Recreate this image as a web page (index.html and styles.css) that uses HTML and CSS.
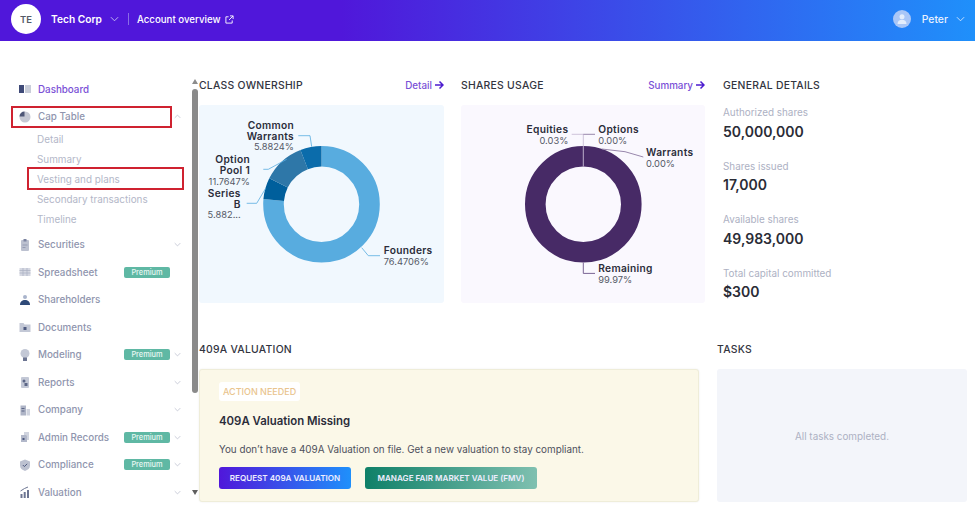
FILE: index.html
```html
<!DOCTYPE html>
<html lang="en">
<head>
<meta charset="utf-8">
<title>Tech Corp</title>
<link rel="stylesheet" href="styles.css">
</head>
<body>
<header class="topbar">
  <div class="avatar">TE</div>
  <span class="company">Tech Corp</span>
  <svg class="chev chev-company" viewBox="0 0 10 6"><path d="M1 1l4 4 4-4"/></svg>
  <span class="divider"></span>
  <span class="overview">Account overview</span>
  <svg class="ext" viewBox="0 0 10 10"><path d="M8 6v3H1V2h3M5.500 1H9v3.500M9 1L4.500 5.500"/></svg>
  <span class="spacer"></span>
  <svg class="user" viewBox="0 0 18 18"><circle cx="9" cy="9" r="9" fill="#a9c6f7"/><circle cx="9" cy="6.800" r="2.500" fill="#e3edfc"/><path d="M4.500 14c0-3 2-4.300 4.500-4.300s4.500 1.300 4.500 4.300z" fill="#e3edfc"/></svg>
  <span class="username">Peter</span>
  <svg class="chev chev-user" viewBox="0 0 10 6"><path d="M1 1l4 4 4-4"/></svg>
</header>

<div class="layout">
  <aside class="sidebar">
    <nav class="nav">
      <div class="row active">
        <svg class="ico" viewBox="0 0 14 14"><rect x="1" y="3" width="5" height="8" fill="#3f4a78"/><rect x="7" y="3" width="6" height="8" fill="#c9cdd9"/></svg>
        <span class="label">Dashboard</span>
      </div>
      <div class="row">
        <svg class="ico" viewBox="0 0 14 14"><circle cx="7" cy="7" r="5.500" fill="#c6c9d4"/><path d="M6.500 1.500v5h-5a5 5 0 0 1 5-5z" fill="#4e5777"/></svg>
        <span class="label">Cap Table</span>
        <svg class="arrow" viewBox="0 0 10 6"><path d="M1 5l4-4 4 4"/></svg>
        <span class="mark mark-cap"></span>
      </div>
      <div class="subs">
        <div class="sub">Detail</div>
        <div class="sub">Summary</div>
        <div class="sub">Vesting and plans<span class="mark mark-vest"></span></div>
        <div class="sub">Secondary transactions</div>
        <div class="sub">Timeline</div>
      </div>
      <div class="row row-after-subs">
        <svg class="ico" viewBox="0 0 14 14"><rect x="3" y="2" width="8" height="11" rx="1" fill="#bcc1d0"/><rect x="5.500" y="1" width="3" height="2.500" fill="#7b83a0"/><path d="M4.500 7h5M4.500 9.500h3" stroke="#8d94ad" stroke-width=".8"/></svg>
        <span class="label">Securities</span>
        <svg class="arrow" viewBox="0 0 10 6"><path d="M1 1l4 4 4-4"/></svg>
      </div>
      <div class="row">
        <svg class="ico" viewBox="0 0 14 14"><rect x="1.500" y="3" width="11" height="8" fill="#d5d8e2"/><path d="M1.500 5.500h11M1.500 8h11M5 3v8M9 3v8" stroke="#aab0c2" stroke-width=".7"/></svg>
        <span class="label">Spreadsheet</span>
        <span class="badge">Premium</span>
      </div>
      <div class="row">
        <svg class="ico" viewBox="0 0 14 14"><circle cx="7" cy="4" r="2" fill="#a9b4cc"/><path d="M2 12c0-3.500 2.200-5 5-5s5 1.500 5 5z" fill="#2f4a78"/></svg>
        <span class="label">Shareholders</span>
      </div>
      <div class="row">
        <svg class="ico" viewBox="0 0 14 14"><path d="M1.500 3h4l1 1.500h6V12h-11z" fill="#c3c8d6"/><rect x="5.500" y="7" width="3" height="3" fill="#4e5a80"/></svg>
        <span class="label">Documents</span>
      </div>
      <div class="row">
        <svg class="ico" viewBox="0 0 14 14"><circle cx="7" cy="5.500" r="4.500" fill="#c3c8d6"/><rect x="5" y="9.500" width="4" height="3.500" fill="#6c7592"/></svg>
        <span class="label">Modeling</span>
        <span class="badge">Premium</span>
        <svg class="arrow" viewBox="0 0 10 6"><path d="M1 1l4 4 4-4"/></svg>
      </div>
      <div class="row">
        <svg class="ico" viewBox="0 0 14 14"><rect x="3" y="2" width="8" height="11" rx="1" fill="#c3c8d6"/><circle cx="6" cy="6" r="1.500" fill="#5c6686"/><rect x="6.500" y="8" width="3" height="3" fill="#5c6686"/></svg>
        <span class="label">Reports</span>
        <svg class="arrow" viewBox="0 0 10 6"><path d="M1 1l4 4 4-4"/></svg>
      </div>
      <div class="row">
        <svg class="ico" viewBox="0 0 14 14"><rect x="2.500" y="2.500" width="5.500" height="10" fill="#aeb4c6"/><rect x="8.500" y="6" width="3.500" height="6.500" fill="#d0d4df"/><path d="M3.500 5.500h3M3.500 8h3" stroke="#5c6686"/></svg>
        <span class="label">Company</span>
        <svg class="arrow" viewBox="0 0 10 6"><path d="M1 1l4 4 4-4"/></svg>
      </div>
      <div class="row">
        <svg class="ico" viewBox="0 0 14 14"><path d="M6 2h5v8H6z" fill="#d0d4df"/><path d="M3 5h5l1 1v6H3z" fill="#b2b8ca"/><rect x="4.500" y="8" width="2" height="2" fill="#4e5a80"/></svg>
        <span class="label">Admin Records</span>
        <span class="badge">Premium</span>
        <svg class="arrow" viewBox="0 0 10 6"><path d="M1 1l4 4 4-4"/></svg>
      </div>
      <div class="row">
        <svg class="ico" viewBox="0 0 14 14"><path d="M7 1.500l5 2v4c0 2.800-2.200 4.500-5 5.500-2.800-1-5-2.700-5-5.500v-4z" fill="#bcc1d0"/><path d="M4.800 7l1.600 1.600 2.800-2.800" fill="none" stroke="#4e5a80" stroke-width="1"/></svg>
        <span class="label">Compliance</span>
        <span class="badge">Premium</span>
        <svg class="arrow" viewBox="0 0 10 6"><path d="M1 1l4 4 4-4"/></svg>
      </div>
      <div class="row">
        <svg class="ico" viewBox="0 0 14 14"><path d="M2.500 9h2v4h-2zM5.700 7h2v6h-2zM9 5h2v8H9z" fill="#6c7592"/><path d="M2.500 6l4-2.500L10 2" fill="none" stroke="#6c7592"/></svg>
        <span class="label">Valuation</span>
        <svg class="arrow" viewBox="0 0 10 6"><path d="M1 1l4 4 4-4"/></svg>
      </div>
    </nav>
    <div class="scrollbar">
      <span class="tri tri-up"></span>
      <span class="thumb"></span>
      <span class="tri tri-down"></span>
    </div>
  </aside>

  <main class="main">
    <section class="top-grid">
      <div>
        <div class="head"><h2>CLASS OWNERSHIP</h2><a class="more">Detail<svg class="more-arrow" viewBox="0 0 10 10"><path d="M1 5h8M5.500 1.500L9 5 5.500 8.500"/></svg></a></div>
        <div class="panel panel-blue">
          <svg class="chart" viewBox="0 0 245 198">
            <g fill="none" stroke-width="20.600" transform="rotate(-90 122.500 99.300)">
              <circle cx="122.500" cy="99.300" r="48" pathLength="100" stroke="#58acdf" stroke-dasharray="76.47 23.53"/>
              <circle cx="122.500" cy="99.300" r="48" pathLength="100" stroke="#005f9c" stroke-dasharray="5.88 94.12" stroke-dashoffset="-76.47"/>
              <circle cx="122.500" cy="99.300" r="48" pathLength="100" stroke="#2e77a8" stroke-dasharray="11.77 88.23" stroke-dashoffset="-82.35"/>
              <circle cx="122.500" cy="99.300" r="48" pathLength="100" stroke="#0b6cab" stroke-dasharray="5.88 94.12" stroke-dashoffset="-94.12"/>
            </g>
            <g fill="none" stroke="#58acdf" stroke-width=".8">
              <path d="M99.300 30.700H111l1.700 11"/>
              <path d="M64.300 64.300h5l18.400-10"/>
              <path d="M47.700 98.300h10l9-15"/>
              <path d="M162.700 142.700l6.600 8H181"/>
            </g>
            <g class="lab end">
              <text x="95" y="24">Common</text><text x="95" y="34.700">Warrants</text><text class="val" x="95" y="45.300">5.8824%</text>
              <text x="51" y="58">Option</text><text x="51" y="69">Pool 1</text><text class="val" x="51" y="80">11.7647%</text>
              <text x="41.700" y="92">Series</text><text x="41.700" y="102.700">B</text><text class="val" x="41.700" y="113">5.882...</text>
            </g>
            <g class="lab">
              <text x="184.700" y="149">Founders</text><text class="val" x="184.700" y="160">76.4706%</text>
            </g>
          </svg>
        </div>
      </div>
      <div>
        <div class="head"><h2>SHARES USAGE</h2><a class="more">Summary<svg class="more-arrow" viewBox="0 0 10 10"><path d="M1 5h8M5.500 1.500L9 5 5.500 8.500"/></svg></a></div>
        <div class="panel panel-violet">
          <svg class="chart" viewBox="0 0 244 198">
            <circle cx="122.300" cy="99.300" r="48" fill="none" stroke="#472a66" stroke-width="20.600"/>
            <g fill="none" stroke-width=".9">
              <path d="M110.700 29.300h11.600v32" stroke="#c9bed6"/>
              <path d="M122.300 29.300H134" stroke="#8d7ba3"/>
              <path d="M140.700 44l23.300 2.700L182.300 52" stroke="#8d7ba3"/>
              <path d="M122.300 157.700v10.700H134" stroke="#6c5488"/>
            </g>
            <g class="lab end">
              <text x="107.300" y="28.300">Equities</text><text class="val" x="107.300" y="39">0.03%</text>
            </g>
            <g class="lab">
              <text x="137.300" y="28.300">Options</text><text class="val" x="137.300" y="39">0.00%</text>
              <text x="185" y="51">Warrants</text><text class="val" x="185" y="61.700">0.00%</text>
              <text x="137.300" y="167">Remaining</text><text class="val" x="137.300" y="177.700">99.97%</text>
            </g>
          </svg>
        </div>
      </div>
      <div class="col-general">
        <div class="head"><h2>GENERAL DETAILS</h2></div>
        <dl class="details">
          <div class="detail"><dt>Authorized shares</dt><dd>50,000,000</dd></div>
          <div class="detail"><dt>Shares issued</dt><dd>17,000</dd></div>
          <div class="detail"><dt>Available shares</dt><dd>49,983,000</dd></div>
          <div class="detail"><dt>Total capital committed</dt><dd>$300</dd></div>
        </dl>
      </div>
    </section>

    <section class="bottom-grid">
      <div>
        <div class="head"><h2>409A VALUATION</h2></div>
        <div class="card">
          <span class="tag">ACTION NEEDED</span>
          <h3>409A Valuation Missing</h3>
          <p>You don’t have a 409A Valuation on file. Get a new valuation to stay compliant.</p>
          <div class="buttons">
            <button class="btn btn-blue">REQUEST 409A VALUATION</button>
            <button class="btn btn-green">MANAGE FAIR MARKET VALUE (FMV)</button>
          </div>
        </div>
      </div>
      <div>
        <div class="head"><h2>TASKS</h2></div>
        <div class="tasks">All tasks completed.</div>
      </div>
    </section>
  </main>
</div>
</body>
</html>
```

FILE: styles.css
```css
* { box-sizing: border-box; }
html, body { margin: 0; height: 505px; overflow: hidden; background: #fff; }
body { font-family: Inter, "Liberation Sans", sans-serif; color: #2b2d3a; }

.topbar {
  display: flex; align-items: center; height: 41px; padding: 0 10px 3px 11px;
  background: linear-gradient(90deg, #5017da 0%, #5017da 35%, #1f90fb 100%);
  color: #fff;
}
.avatar {
  width: 30px; height: 30px; border-radius: 50%; background: #fff; color: #555a66;
  display: flex; align-items: center; justify-content: center;
  font-size: 9.5px; font-weight: 600; margin-right: 10px;
}
.company { font-size: 10.2px; font-weight: 600; }
.chev { fill: none; stroke: #c9c4f2; stroke-width: 1; width: 9px; height: 6px; }
.chev-company { margin: 0 9px 0 8.500px; }
.divider { width: 1px; height: 12px; background: #8a6de6; margin-right: 7.500px; }
.overview { font-size: 9.700px; font-weight: 500; }
.ext { width: 9px; height: 9px; margin-left: 4.500px; fill: none; stroke: #fff; stroke-width: 1; }
.spacer { flex: 1; }
.user { width: 18px; height: 18px; margin-right: 11px; }
.username { font-size: 10.4px; font-weight: 500; color: #e8f0fe; }
.chev-user { margin-left: 8px; stroke: #d5e6fd; }

.layout { display: flex; height: 464px; }
.sidebar { width: 199px; flex: none; display: flex; }
.nav { width: 191px; padding-top: 34.500px; flex: none; }
.row {
  position: relative; display: flex; align-items: center; height: 27.500px;
  padding-left: 18px; font-size: 9.8px; color: #8f95ae; font-weight: 500;
}
.row-after-subs { margin-top: 2px; }
.active { color: #7a4fd6; }
.ico { width: 14px; height: 14px; flex: none; }
.label { margin-left: 6px; white-space: nowrap; }
.arrow {
  position: absolute; left: 174px; top: 11px; width: 7px; height: 5px;
  fill: none; stroke: #b4b8c8; stroke-width: 1;
}
.badge {
  position: absolute; left: 124px; top: 8.250px; width: 46px; height: 11px;
  background: #5fb8a4; color: #e8f7f3; border-radius: 2px;
  font-size: 7.4px; line-height: 11px; text-align: center; font-weight: 500;
}
.subs { padding-left: 37px; margin-top: -1.500px; }
.sub { position: relative; height: 20px; line-height: 20px; font-size: 9.900px; color: #b3b7c8; white-space: nowrap; }
.mark { position: absolute; border: 2px solid #cf2230; }
.mark-cap { left: 11px; top: 2.500px; width: 161px; height: 22px; }
.mark-vest { left: -10px; top: -2px; width: 157px; height: 23px; }

.scrollbar { width: 8px; position: relative; margin-left: 0; display: flex; flex-direction: column; align-items: center; }
.tri { width: 0; height: 0; border-left: 3.500px solid transparent; border-right: 3.500px solid transparent; flex: none; }
.tri-up { border-bottom: 5px solid #8c8c8c; margin-top: 38px; }
.tri-down { border-top: 5px solid #5f5f5f; margin-top: 97px; }
.thumb { width: 6px; height: 304px; background: #8a8a8a; border-radius: 3px; margin-top: 5px; flex: none; }

.main { flex: 1; min-width: 0; padding-top: 34px; }
.top-grid { display: grid; grid-template-columns: 245px 244px 1fr; column-gap: 17px; }
.col-general { padding-left: 1px; }
.bottom-grid { display: grid; grid-template-columns: 500px 250px; column-gap: 18px; margin-top: 20px; }
.head { display: flex; justify-content: space-between; align-items: center; height: 20px; margin-bottom: 10px; }
h2 { margin: 0; font-size: 10.4px; font-weight: 500; letter-spacing: .25px; color: #33353f; }
.more { display: flex; align-items: center; font-size: 9.800px; color: #7a4fd6; font-weight: 500; }
.more-arrow { width: 10px; height: 10px; margin-left: 2px; fill: none; stroke: #4c1ccf; stroke-width: 1.500; }

.panel { height: 198px; border-radius: 3px; }
.panel-blue { background: #f1f8fe; }
.panel-violet { background: #faf8fe; }
.chart { display: block; width: 100%; height: 100%; }
.lab text { font-size: 10.200px; letter-spacing: .3px; font-weight: 600; fill: #2b2d3a; }
.lab .val { font-weight: 400; fill: #555866; font-size: 9.300px; letter-spacing: 0; }
.end { text-anchor: end; }

.details { margin: 0; }
.detail { height: 53.500px; }
dt { font-size: 9.900px; color: #adb1c3; line-height: 15px; }
dd { margin: 1.500px 0 0; font-size: 14px; font-weight: 600; line-height: 20px; color: #2a2c36; }

.card {
  height: 133px; padding: 12px 19px 0; background: #fbf8e8; border: 1px solid #efedd9; border-radius: 3px;
  box-shadow: 0 0 2px rgba(0,0,0,.08);
}
.tag {
  display: block; width: fit-content; height: 19px; padding: 0 4px; background: #fff; border-radius: 3px;
  font-size: 9px; line-height: 19px; color: #e9c48e; font-weight: 500;
}
h3 { margin: 12px 0 0; font-size: 11.400px; font-weight: 600; line-height: 16px; color: #2b2d3a; }
.card p { margin: 13px 0 0; font-size: 9.850px; line-height: 14px; color: #4e505c; white-space: nowrap; }
.buttons { display: flex; gap: 14px; margin-top: 11px; }
.btn {
  height: 22px; border: 0; border-radius: 3px; color: #eef; padding: 0;
  font-family: inherit; font-size: 8.100px; font-weight: 600; text-align: center;
}
.btn-blue { width: 132px; background: linear-gradient(90deg, #5017da, #1f90fb); }
.btn-green { width: 172px; background: linear-gradient(90deg, #0f8068, #7fc0b0); }
.tasks {
  height: 133px; background: #f3f5fa; border-radius: 3px; color: #adb1c3; font-size: 9.900px;
  display: flex; align-items: center; justify-content: center;
}
```
